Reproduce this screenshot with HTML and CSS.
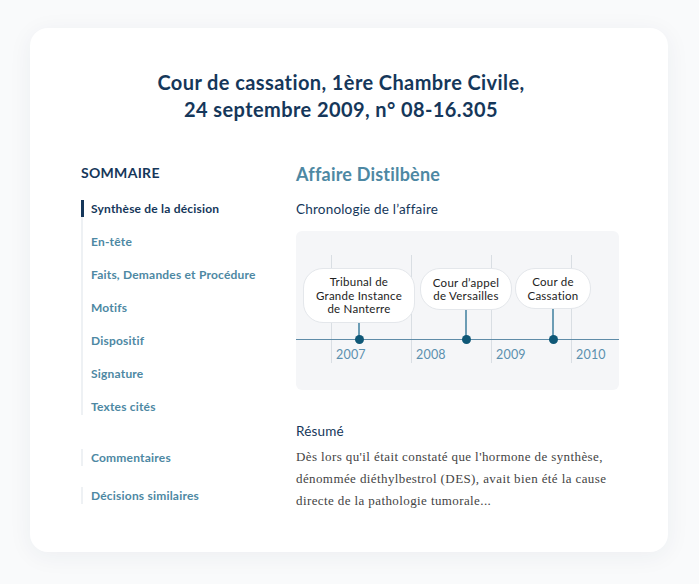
FILE: index.html
```html
<!DOCTYPE html>
<html lang="fr">
<head>
<meta charset="utf-8">
<title>Cour de cassation</title>
<link rel="stylesheet" href="styles.css">
</head>
<body>
<div class="card">
  <h1 class="title">Cour de cassation, 1ère Chambre Civile,<br>24 septembre 2009, n° 08-16.305</h1>
  <div class="content">
    <nav class="sidebar">
      <div class="sommaire">SOMMAIRE</div>
      <ul class="nav-group">
        <li class="active">Synthèse de la décision</li>
        <li>En-tête</li>
        <li>Faits, Demandes et Procédure</li>
        <li>Motifs</li>
        <li>Dispositif</li>
        <li>Signature</li>
        <li>Textes cités</li>
      </ul>
      <ul class="nav-group single g2">
        <li>Commentaires</li>
      </ul>
      <ul class="nav-group single g3">
        <li>Décisions similaires</li>
      </ul>
    </nav>
    <main class="main">
      <h2 class="affaire">Affaire Distilbène</h2>
      <h3 class="sub">Chronologie de l’affaire</h3>
      <div class="timeline">
        <div class="vline" style="left:35px"></div>
        <div class="vline" style="left:115px"></div>
        <div class="vline" style="left:195px"></div>
        <div class="vline" style="left:275px"></div>
        <div class="axis"></div>
        <span class="year" style="left:40px">2007</span>
        <span class="year" style="left:120px">2008</span>
        <span class="year" style="left:200px">2009</span>
        <span class="year" style="left:280px">2010</span>

        <div class="stem" style="left:62px;top:92px;height:16px"></div>
        <div class="stem" style="left:169px;top:79px;height:29px"></div>
        <div class="stem" style="left:256px;top:78px;height:30px"></div>
        <div class="dot" style="left:63px"></div>
        <div class="dot" style="left:170px"></div>
        <div class="dot" style="left:257px"></div>

        <div class="bubble b1">Tribunal de<br>Grande Instance<br>de Nanterre</div>
        <div class="bubble b2">Cour d’appel<br>de Versailles</div>
        <div class="bubble b3">Cour de<br>Cassation</div>
      </div>
      <h3 class="sub resume">Résumé</h3>
      <p class="text">Dès lors qu'il était constaté que l'hormone de synthèse, dénommée diéthylbestrol (DES), avait bien été la cause directe de la pathologie tumorale...</p>
    </main>
  </div>
</div>
</body>
</html>
```

FILE: styles.css
```css
* { box-sizing: border-box; }
html, body { margin: 0; padding: 0; }
body {
  background: #f9fafb;
  font-family: Lato, "Open Sans", sans-serif;
  padding: 28px 31px 32px 30px;
}
.card {
  background: #ffffff;
  border-radius: 18px;
  box-shadow: 0 4px 24px rgba(30, 50, 80, 0.06);
  width: 638px;
  height: 524px;
  padding: 41px 49px 0 51px;
}
.title {
  margin: 0;
  padding-right: 18px;
  text-align: center;
  font-size: 20px;
  line-height: 27px;
  font-weight: 700;
  letter-spacing: 0.4px;
  color: #15375a;
}
.content {
  display: flex;
  margin-top: 41px;
}
.sidebar {
  width: 215px;
  flex: none;
}
.sommaire {
  font-size: 14px;
  line-height: 17px;
  font-weight: 700;
  color: #15375a;
  letter-spacing: 0.3px;
}
.nav-group {
  list-style: none;
  margin: 19px 0 0 0;
  padding: 0;
  border-left: 2px solid #eef1f4;
  display: flex;
  flex-direction: column;
  gap: 16px;
}
.nav-group li {
  font-size: 12px;
  line-height: 17px;
  font-weight: 700;
  letter-spacing: 0.2px;
  color: #4d88a3;
  padding-left: 8px;
}
.nav-group li.active {
  color: #15375a;
  margin-left: -2px;
  border-left: 3px solid #15375a;
  padding-left: 7px;
}
.nav-group.g2 { margin-top: 34px; }
.nav-group.g3 { margin-top: 21px; }
.main {
  width: 323px;
  flex: none;
}
.affaire {
  margin: 0;
  font-size: 18px;
  line-height: 20px;
  font-weight: 700;
  letter-spacing: 0.2px;
  color: #4d88a3;
}
.sub {
  margin: 17px 0 0 0;
  font-size: 13.5px;
  line-height: 16px;
  font-weight: 400;
  letter-spacing: 0.2px;
  color: #15375a;
}
.timeline {
  position: relative;
  margin-top: 14px;
  height: 159px;
  background: #f5f6f8;
  border-radius: 6px;
}
.vline {
  position: absolute;
  top: 24px;
  width: 1px;
  height: 108px;
  background: #d9dee3;
}
.axis {
  position: absolute;
  left: 0;
  right: 0;
  top: 108px;
  height: 1px;
  background: #5f8ca8;
}
.year {
  position: absolute;
  top: 116px;
  font-size: 12.5px;
  line-height: 16px;
  letter-spacing: 0.2px;
  color: #5b90ae;
}
.stem {
  position: absolute;
  width: 2px;
  background: #6c9db5;
}
.dot {
  position: absolute;
  top: 108px;
  width: 9px;
  height: 9px;
  margin: -4px 0 0 -4px;
  border-radius: 50%;
  background: #0f5877;
}
.bubble {
  position: absolute;
  top: 37px;
  background: #ffffff;
  border: 1px solid #e4e7eb;
  border-radius: 20px;
  font-size: 11.5px;
  line-height: 13.5px;
  letter-spacing: 0.25px;
  color: #222;
  text-align: center;
  display: flex;
  align-items: center;
  justify-content: center;
}
.b1 { left: 7px; width: 112px; height: 55px; }
.b2 { left: 124px; width: 92px; height: 42px; }
.b3 { left: 219px; width: 76px; height: 41px; }
.resume { margin-top: 33px; }
.text {
  margin: 7px 0 0 0;
  font-family: "Liberation Serif", "Times New Roman", serif;
  font-size: 13px;
  line-height: 22px;
  letter-spacing: 0.4px;
  color: #444;
}
```
